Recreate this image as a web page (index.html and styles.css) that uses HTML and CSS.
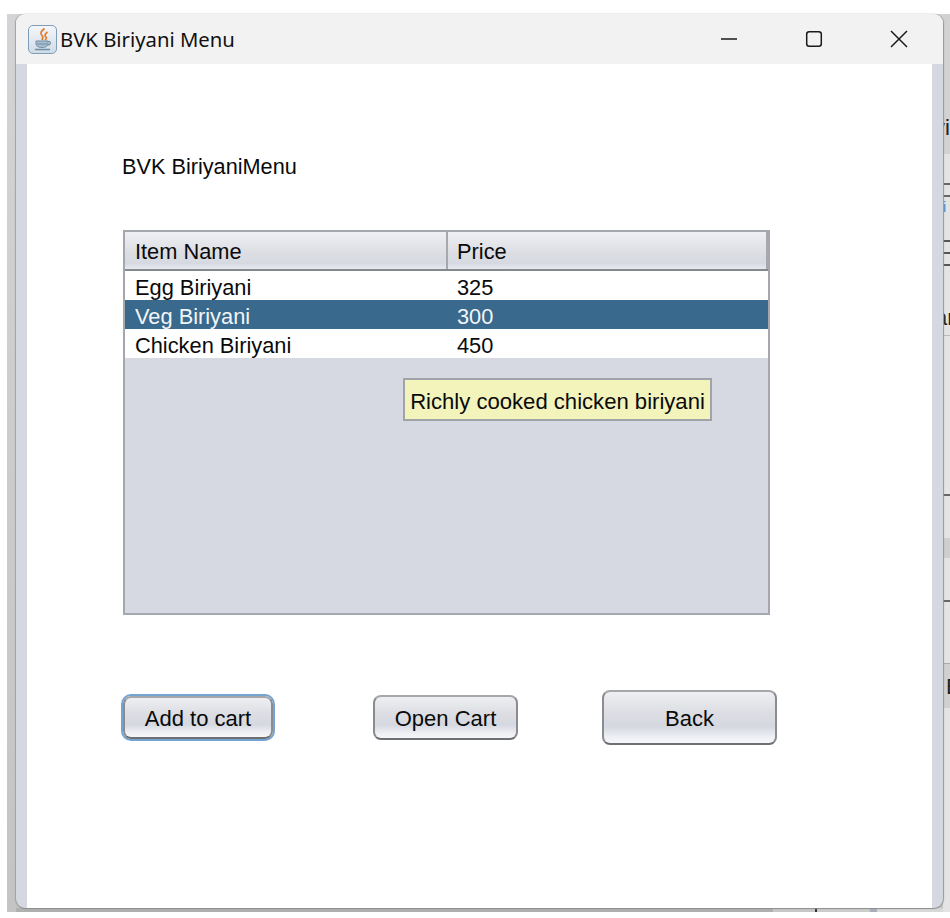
FILE: index.html
```html
<!DOCTYPE html>
<html lang="en">
<head>
    <meta charset="UTF-8">
    <meta name="viewport" content="width=device-width, initial-scale=1.0">
    <title>BVK Biriyani Menu</title>
    <link rel="stylesheet" href="styles.css">
</head>
<body>
    <div class="desktop">
        <div class="window-column">
            <div class="window">
                <div class="title-bar">
                    <span class="java-icon">
                        <svg width="26" height="26" viewBox="0 0 26 26">
                            <path d="M14.5 2.5c-4 3-4.500 5-2.500 7 1.200 1.200 1 3-.2 4.500M17.500 6c-3 2-3 4-1.500 5 1 1 .2 2-1 3" fill="none" stroke="#e07b2a" stroke-width="1.700"/>
                            <path d="M6 15h12v2.500c0 2.500-2 4-6 4s-6-1.500-6-4z" fill="#a9bfd0" stroke="#6f8da5" stroke-width="1"/>
                            <path d="M7 18h10" stroke="#6f8da5" stroke-width="1"/>
                            <path d="M18 15.500c3-.5 3.500 3-.5 3.500" fill="none" stroke="#6f8da5" stroke-width="1.200"/>
                            <path d="M5 23.500h15" stroke="#6f8da5" stroke-width="1.300"/>
                        </svg>
                    </span>
                    <span class="window-title">BVK Biriyani Menu</span>
                    <div class="window-controls">
                        <svg width="18" height="18" viewBox="0 0 18 18"><path d="M1 9h16" stroke="#1a1a1a" stroke-width="1.500"/></svg>
                        <svg width="18" height="18" viewBox="0 0 18 18"><rect x="1.700" y="1.700" width="14.600" height="14.600" rx="2.500" fill="none" stroke="#1a1a1a" stroke-width="1.500"/></svg>
                        <svg width="18" height="18" viewBox="0 0 18 18"><path d="M1 1l16 16M17 1L1 17" stroke="#1a1a1a" stroke-width="1.500"/></svg>
                    </div>
                </div>
                <div class="content">
                    <div class="page-label">BVK BiriyaniMenu</div>
                    <div class="table-box">
                        <div class="table-row table-head">
                            <div class="cell name-cell">Item Name</div>
                            <div class="cell price-cell">Price</div>
                        </div>
                        <div class="table-row">
                            <div class="cell name-cell">Egg Biriyani</div>
                            <div class="cell">325</div>
                        </div>
                        <div class="table-row selected">
                            <div class="cell name-cell">Veg Biriyani</div>
                            <div class="cell">300</div>
                        </div>
                        <div class="table-row">
                            <div class="cell name-cell">Chicken Biriyani</div>
                            <div class="cell">450</div>
                        </div>
                        <div class="tooltip">Richly cooked chicken biriyani</div>
                    </div>
                    <div class="button-row">
                        <button class="btn btn-focus">Add to cart</button>
                        <button class="btn btn-open">Open Cart</button>
                        <button class="btn btn-back">Back</button>
                    </div>
                </div>
            </div>
            <div class="taskbar">
                <div class="bar-dark"></div>
                <div class="bar-mid"></div>
                <div class="bar-tick"></div>
                <div class="bar-light"></div>
                <div class="bar-blue"></div>
                <div class="bar-end"></div>
            </div>
        </div>
        <div class="behind">
            <div class="piece piece-vi"><span>vi</span></div>
            <div class="piece piece-lines"></div>
            <div class="piece piece-link"><span>i</span></div>
            <div class="piece piece-stack"></div>
            <div class="piece piece-an"><span>an</span></div>
            <div class="piece piece-plain"></div>
            <div class="piece piece-gap"></div>
            <div class="piece piece-band"></div>
            <div class="piece piece-rule"></div>
            <div class="piece piece-gap2"></div>
            <div class="piece piece-e"><span>E</span></div>
            <div class="piece piece-rest"></div>
        </div>
    </div>
</body>
</html>
```

FILE: styles.css
```css
body {
    margin: 0;
    background: #fff;
    font-family: "Liberation Sans", Arial, sans-serif;
    color: #0a0a0a;
}

.desktop {
    display: flex;
    width: 943px;
    height: 898px;
    margin: 14px 0 0 7px;
    padding-left: 9px;
    box-sizing: border-box;
    background: linear-gradient(to bottom, #d4d4d6, #c4c4c4);
}

.window-column {
    display: flex;
    flex-direction: column;
    flex: none;
    width: 927px;
}

.window {
    position: relative;
    display: flex;
    flex-direction: column;
    flex: none;
    height: 894px;
    border-radius: 9px;
    overflow: hidden;
    background: #d5d8e0;
    box-shadow: 0 1px 1px #8d8d8d, -1px 0 1px #a5a5a5, 1px 0 1px #9a9a9a;
}

.title-bar {
    display: flex;
    align-items: center;
    flex: none;
    height: 50px;
    padding-left: 12px;
    background: #f3f2f3;
}

.java-icon {
    display: flex;
    align-items: center;
    justify-content: center;
    width: 27px;
    height: 27px;
    border: 1px solid #7d9db8;
    border-radius: 5px;
    background: linear-gradient(to bottom, #f5f7f9, #cfdbe6);
}

.window-title {
    margin-left: 3px;
    font-family: "Noto Sans", sans-serif;
    font-size: 20.3px;
    color: #111;
}

.window-controls {
    display: flex;
    align-items: center;
    gap: 67px;
    margin-left: auto;
    margin-right: 35px;
}

.content {
    flex: 1;
    margin: 0 11px;
    padding: 91px 0 0 95px;
    background: #fff;
}

.page-label {
    height: 24px;
    font-size: 21.7px;
    line-height: 24px;
}

.table-box {
    position: relative;
    box-sizing: border-box;
    width: 647px;
    height: 385px;
    margin: 51px 0 0 1px;
    border: 2px solid #a4a7ad;
    background: #d6d9e1;
    font-size: 21.8px;
}

.table-row {
    display: flex;
    height: 29px;
    background: #fff;
}

.table-head {
    box-sizing: border-box;
    height: 39px;
    border-bottom: 2px solid #85888e;
    background: linear-gradient(to bottom, #eef0f4, #dcdee3 55%, #d6d9e0 85%, #e8eaef);
}

.table-head .cell {
    line-height: 40px;
}

.table-head .name-cell {
    width: 321px;
}

.table-head .price-cell {
    padding-left: 9px;
    border-left: 2px solid #a6a8ae;
    border-right: 2px solid #a6a8ae;
}

.cell {
    box-sizing: border-box;
    flex: 1;
    padding-left: 10px;
    line-height: 34px;
}

.name-cell {
    flex: none;
    width: 322px;
}

.selected {
    background: #39698c;
    color: #f2f5f8;
}

.tooltip {
    position: absolute;
    left: 278px;
    top: 146px;
    box-sizing: border-box;
    width: 309px;
    height: 43px;
    border: 2px solid #a0a3a8;
    background: #f3f3bc;
    font-size: 22.1px;
    line-height: 44px;
    text-align: center;
    white-space: nowrap;
}

.button-row {
    display: flex;
    align-items: center;
    height: 55px;
    margin-top: 75px;
}

.btn {
    box-sizing: border-box;
    padding: 3px 0 0;
    border: 2px solid #8a8c91;
    border-top-color: #a5a7aa;
    border-bottom-color: #6d6f73;
    border-radius: 8px;
    background: linear-gradient(to bottom, #eeeff2, #dcdee3 40%, #d5d8e0 68%, #edeff4 88%, #f6f7fa);
    font-family: "Liberation Sans", Arial, sans-serif;
    font-size: 22px;
    color: #0a0a0a;
}

.btn-focus {
    width: 150px;
    height: 43px;
    margin-left: 1px;
    box-shadow: 0 0 0 2px #74a5d2;
}

.btn-open {
    width: 145px;
    height: 45px;
    margin-left: 100px;
}

.btn-back {
    width: 175px;
    height: 55px;
    margin-left: 84px;
}

/* sliver of the window underneath, right of this one */
.behind {
    display: flex;
    flex-direction: column;
    flex: none;
    width: 7px;
    overflow: hidden;
    background: #e4e4e4;
    font-size: 22px;
    color: #222;
}

.piece {
    flex: none;
    box-sizing: border-box;
    overflow: hidden;
    white-space: nowrap;
}

.piece span {
    display: block;
}

.piece-vi {
    height: 140px;
    padding-top: 102px;
    background: #d2d2d2;
    line-height: 24px;
}

.piece-vi span {
    margin-left: -9px;
}

.piece-lines {
    height: 43px;
    background: linear-gradient(to bottom, #e4e4e4 29px, #666 29px 31px, #e4e4e4 31px 41px, #666 41px);
}

.piece-link {
    height: 43px;
    font-size: 14px;
    line-height: 20px;
    color: #2a8fd0;
}

.piece-stack {
    height: 26px;
    background: repeating-linear-gradient(to bottom, #555 0 2px, #e4e4e4 2px 12px);
}

.piece-an {
    height: 69px;
    padding-top: 41px;
    line-height: 22px;
}

.piece-an span {
    margin-left: -8px;
}

.piece-plain {
    height: 161px;
    border-top: 1px solid #bbb;
    border-bottom: 2px solid #666;
}

.piece-gap {
    height: 42px;
}

.piece-band {
    height: 20px;
    background: #cfcfcf;
}

.piece-rule {
    height: 44px;
    border-bottom: 2px solid #666;
}

.piece-gap2 {
    height: 61px;
}

.piece-e {
    height: 45px;
    padding-top: 11px;
    border-top: 1px solid #aaa;
    background: #d0d0d0;
    line-height: 24px;
}

.piece-e span {
    margin-left: 3px;
}

.piece-rest {
    flex: 1;
}

.taskbar {
    display: flex;
    flex: 1;
}

.bar-dark {
    width: 757px;
    background: #b0b0b0;
}

.bar-mid {
    width: 42px;
    background: #c8c8c8;
}

.bar-tick {
    width: 2px;
    background: #333;
}

.bar-light {
    width: 53px;
    background: #ccc;
}

.bar-blue {
    width: 7px;
    background: #a8adb8;
}

.bar-end {
    flex: 1;
    background: #d8d8d8;
}
```
